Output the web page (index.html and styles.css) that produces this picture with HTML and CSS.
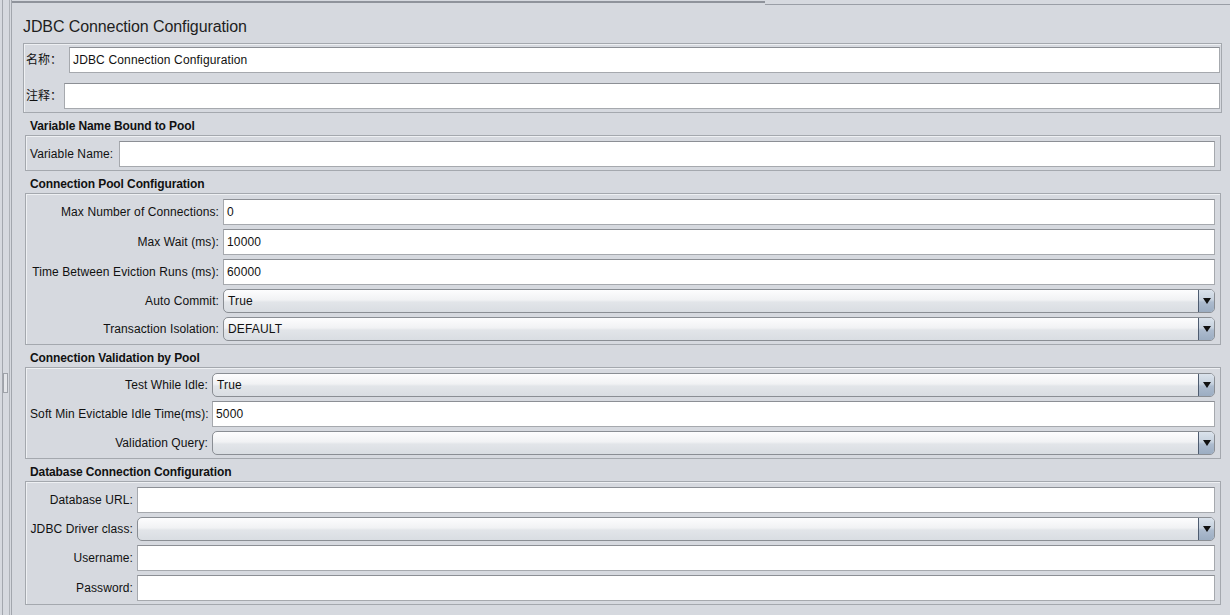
FILE: index.html
```html
<!DOCTYPE html>
<html>
<head>
<meta charset="utf-8">
<link rel="stylesheet" href="styles.css">
</head>
<body>
<div class="root">
  <div class="split"><div class="grip"></div></div>
  <div class="main">
    <div class="topbar"><div class="tb-left"></div><div class="tb-right"></div></div>
    <div class="content">
      <div class="title">JDBC Connection Configuration</div>
      <div class="namebox">
        <div class="nrow">
          <span class="nlabel nlabel-name">名称：</span>
          <div class="field">JDBC Connection Configuration</div>
        </div>
        <div class="nrow">
          <span class="nlabel nlabel-comment">注释：</span>
          <div class="field"></div>
        </div>
      </div>

      <div class="section">
        <div class="stitle">Variable Name Bound to Pool</div>
        <div class="sbox grid grid-var">
          <span class="label left">Variable Name:</span>
          <div class="field"></div>
        </div>
      </div>

      <div class="section">
        <div class="stitle">Connection Pool Configuration</div>
        <div class="sbox grid grid-pool">
          <span class="label">Max Number of Connections:</span>
          <div class="field">0</div>
          <span class="label">Max Wait (ms):</span>
          <div class="field">10000</div>
          <span class="label">Time Between Eviction Runs (ms):</span>
          <div class="field">60000</div>
          <span class="label">Auto Commit:</span>
          <div class="combo"><span class="cval">True</span><span class="cbtn"><span class="tri"></span></span></div>
          <span class="label">Transaction Isolation:</span>
          <div class="combo"><span class="cval">DEFAULT</span><span class="cbtn"><span class="tri"></span></span></div>
        </div>
      </div>

      <div class="section">
        <div class="stitle">Connection Validation by Pool</div>
        <div class="sbox grid grid-val">
          <span class="label">Test While Idle:</span>
          <div class="combo"><span class="cval">True</span><span class="cbtn"><span class="tri"></span></span></div>
          <span class="label">Soft Min Evictable Idle Time(ms):</span>
          <div class="field">5000</div>
          <span class="label">Validation Query:</span>
          <div class="combo"><span class="cval"></span><span class="cbtn"><span class="tri"></span></span></div>
        </div>
      </div>

      <div class="section">
        <div class="stitle">Database Connection Configuration</div>
        <div class="sbox grid grid-db">
          <span class="label">Database URL:</span>
          <div class="field"></div>
          <span class="label">JDBC Driver class:</span>
          <div class="combo"><span class="cval"></span><span class="cbtn"><span class="tri"></span></span></div>
          <span class="label">Username:</span>
          <div class="field"></div>
          <span class="label">Password:</span>
          <div class="field"></div>
        </div>
      </div>
    </div>
  </div>
</div>
</body>
</html>
```

FILE: styles.css
```css
html, body {
  margin: 0;
  padding: 0;
  background: #d6d9df;
}
body {
  width: 1230px;
  height: 615px;
  overflow: hidden;
  font-family: "Liberation Sans", "Noto Sans CJK SC", Arial, sans-serif;
  font-size: 12px;
  color: #111;
}
.root {
  display: flex;
  height: 615px;
}
.split {
  margin-left: 2px;
  width: 6px;
  border-left: 1px solid #a3a7ae;
  border-right: 1px solid #aeb2b8;
}
.grip {
  margin-top: 373px;
  width: 3px;
  height: 18px;
  border: 1px solid #9ea2a9;
  background: #e4e6ea;
}
.main {
  flex: 1;
  margin-left: 1px;
  border-left: 1px solid #a2a6ad;
}
.topbar {
  display: flex;
  align-items: flex-start;
  height: 5px;
}
.tb-left {
  width: 753px;
  height: 1px;
  border-bottom: 2px solid #8f939b;
}
.tb-right {
  flex: 1;
  height: 4px;
  border-bottom: 1px solid #9a9ea6;
}
.content {
  padding: 0 8px 0 11px;
}
.title {
  margin-top: 12px;
  font-size: 16px;
  line-height: 20px;
  height: 20px;
  color: #1e1e1e;
  letter-spacing: -0.1px;
}
.namebox {
  margin-top: 6px;
  border: 1px solid #a4a8ae;
  box-shadow: inset 1px 1px 0 #eef0f3;
  padding: 3px 1px 3px 1px;
  display: flex;
  flex-direction: column;
  gap: 10px;
}
.nrow {
  display: flex;
  align-items: center;
}
.nlabel {
  padding-left: 1px;
  flex: none;
  line-height: 14px;
}
.nlabel-name { width: 43px; }
.nlabel-comment { width: 38px; }
.nrow .field { flex: 1; }

.field {
  box-sizing: border-box;
  height: 26px;
  background: #fff;
  border: 1px solid #a6a9ae;
  border-top-color: #8c8f95;
  padding-left: 3px;
  line-height: 24px;
  white-space: nowrap;
  overflow: hidden;
  letter-spacing: 0.15px;
}
.section {
  margin: 0 1px 0 2px;
}
.stitle {
  box-sizing: border-box;
  height: 22px;
  padding: 6px 0 2px 5px;
  line-height: 14px;
  font-weight: bold;
  color: #111;
  letter-spacing: -0.1px;
}
.sbox {
  border: 1px solid #a4a8ae;
  box-shadow: inset 1px 1px 0 #eef0f3;
  padding: 5px 5px 3px 4px;
}
.grid {
  display: grid;
  column-gap: 4px;
  row-gap: 4px;
  align-items: center;
}
.grid-var { grid-template-columns: 85px 1fr; }
.grid-pool { grid-template-columns: 189px 1fr; }
.grid-val { grid-template-columns: 178px 1fr; }
.grid-db { grid-template-columns: 103px 1fr; }
.label {
  text-align: right;
  white-space: nowrap;
  line-height: 14px;
  letter-spacing: 0.1px;
}
.label.left { text-align: left; }

.combo {
  box-sizing: border-box;
  height: 24px;
  display: flex;
  border: 1px solid #8a8e94;
  border-radius: 5px;
  background: linear-gradient(#fdfdfe, #f1f2f4 45%, #e2e5e9 55%, #d9dde2);
  overflow: hidden;
}
.cval {
  flex: 1;
  padding-left: 4px;
  line-height: 22px;
  letter-spacing: 0.15px;
}
.cbtn {
  width: 15px;
  border-left: 1px solid #4e5c70;
  background: linear-gradient(#dbe3ec, #c6d1de 45%, #acbbce 55%, #9cadc2);
  display: flex;
  align-items: center;
  justify-content: center;
}
.tri {
  width: 0;
  height: 0;
  border-left: 4px solid transparent;
  border-right: 4px solid transparent;
  border-top: 6px solid #111;
}
```
